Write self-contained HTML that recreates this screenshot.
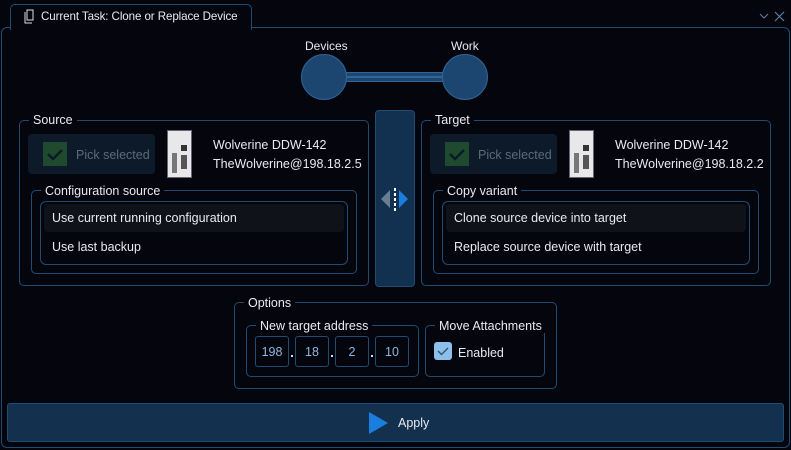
<!DOCTYPE html>
<html><head><meta charset="utf-8"><style>
*{box-sizing:border-box;margin:0;padding:0}
html,body{width:791px;height:450px;overflow:hidden}
body{background:#05060d;font-family:"Liberation Sans",sans-serif;color:#e8eaee;font-size:12px;position:relative}
.a{position:absolute}
.bd{border:1px solid #1f4c74;border-radius:5px}
.lbl{position:absolute;background:#05060d;padding:0 4px;font-size:12.5px;color:#e8eaee;line-height:14px}
.pick{background:#0c1a2a;border-radius:4px}
.chk{position:absolute;width:24px;height:24px;background:#1f4a2e}
.dev{background:#e8e8ea;border:1px solid #667}
.list{border:1px solid #1f4c74;border-radius:6px}
.item{position:absolute;left:3px;right:3px;height:28px;line-height:28px;padding-left:8px;font-size:12.5px;border-radius:4px}
.ip{position:absolute;top:336px;width:34px;height:31px;border:1px solid #1f4c74;border-radius:3px;color:#8fb6e0;text-align:center;line-height:31px;font-size:12.5px}
</style></head><body>
<div class="a" style="left:10px;top:4px;width:242px;height:26px;border:1px solid #1f4c74;border-bottom:none;border-radius:5px 5px 0 0;background:#05060d;z-index:2"></div>
<div class="a" style="left:1px;top:27px;width:789px;height:421px;border:1px solid #1f4c74;border-radius:6px"></div>
<div class="a" style="left:11px;top:26px;width:240px;height:3px;background:#05060d;z-index:2"></div>
<svg class="a" style="left:23px;top:9px;z-index:3" width="14" height="15" viewBox="0 0 14 15"><path d="M4 1h6v10H4z M2 3v11h7" fill="none" stroke="#ddd" stroke-width="1"/></svg>
<div class="a" style="left:41px;top:10px;font-size:11.6px;letter-spacing:-0.1px;z-index:3">Current Task: Clone or Replace Device</div>
<svg class="a" style="left:758px;top:10px" width="30" height="14"><path d="M2 4l4 4 4-4" stroke="#5a7fa6" fill="none"/><path d="M17 2l9 9M26 2l-9 9" stroke="#5a7fa6" stroke-width="1.2"/></svg>
<div class="a" style="left:305px;top:39px;font-size:12px">Devices</div>
<div class="a" style="left:451px;top:39px;font-size:12px">Work</div>
<div class="a" style="left:340px;top:72px;width:110px;height:10px;background:#1c4670;border:1px solid #2f6597"></div>
<div class="a" style="left:345px;top:76px;width:100px;height:2px;background:#2f6597"></div>
<div class="a" style="left:301px;top:54px;width:46px;height:46px;border-radius:50%;background:#1c4670;border:1px solid #2f6597"></div>
<div class="a" style="left:442px;top:54px;width:46px;height:46px;border-radius:50%;background:#1c4670;border:1px solid #2f6597"></div>
<!-- source -->
<div class="a bd" style="left:19px;top:120px;width:350px;height:166px"></div>
<div class="lbl" style="left:29px;top:113px">Source</div>
<div class="a pick" style="left:28px;top:134px;width:127px;height:40px"></div>
<div class="chk" style="left:43px;top:142px"></div>
<svg class="a" style="left:43px;top:142px" width="24" height="24"><path d="M5 12l5 5 9-9" stroke="#0c1a2a" stroke-width="2.5" fill="none"/></svg>
<div class="a" style="left:76px;top:148px;color:#5d6a78;font-size:12.5px">Pick selected</div>
<div class="a dev" style="left:167px;top:130px;width:25px;height:48px"></div>
<div class="a" style="left:181px;top:145px;width:6px;height:6px;background:#333"></div>
<div class="a" style="left:172px;top:153px;width:5px;height:20px;background:#777"></div>
<div class="a" style="left:181px;top:155px;width:6px;height:14px;background:#555"></div>
<div class="a" style="left:213px;top:138px;font-size:12.5px">Wolverine DDW-142</div>
<div class="a" style="left:213px;top:157px;font-size:12.5px">TheWolverine@198.18.2.5</div>
<div class="a bd" style="left:31px;top:190px;width:326px;height:84px"></div>
<div class="lbl" style="left:41px;top:184px">Configuration source</div>
<div class="a list" style="left:40px;top:201px;width:308px;height:64px">
<div class="item" style="top:2px;background:#10121a">Use current running configuration</div>
<div class="item" style="top:31px">Use last backup</div></div>
<!-- middle -->
<div class="a" style="left:375px;top:110px;width:40px;height:177px;background:#12304f;border:1px solid #1f4c74;border-radius:4px"></div>
<svg class="a" style="left:378px;top:186px" width="34" height="28"><path d="M12 4L3 13l9 9z" fill="#6a7d92"/><path d="M21 4l9 9-9 9z" fill="#1a7de0"/><path d="M17 2v24" stroke="#fff" stroke-width="2" stroke-dasharray="3 2"/></svg>
<!-- target -->
<div class="a bd" style="left:421px;top:120px;width:350px;height:166px"></div>
<div class="lbl" style="left:431px;top:113px">Target</div>
<div class="a pick" style="left:430px;top:134px;width:127px;height:40px"></div>
<div class="chk" style="left:445px;top:142px"></div>
<svg class="a" style="left:445px;top:142px" width="24" height="24"><path d="M5 12l5 5 9-9" stroke="#0c1a2a" stroke-width="2.5" fill="none"/></svg>
<div class="a" style="left:478px;top:148px;color:#5d6a78;font-size:12.5px">Pick selected</div>
<div class="a dev" style="left:569px;top:130px;width:25px;height:48px"></div>
<div class="a" style="left:583px;top:145px;width:6px;height:6px;background:#333"></div>
<div class="a" style="left:574px;top:153px;width:5px;height:20px;background:#777"></div>
<div class="a" style="left:583px;top:155px;width:6px;height:14px;background:#555"></div>
<div class="a" style="left:615px;top:138px;font-size:12.5px">Wolverine DDW-142</div>
<div class="a" style="left:615px;top:157px;font-size:12.5px">TheWolverine@198.18.2.2</div>
<div class="a bd" style="left:433px;top:190px;width:326px;height:84px"></div>
<div class="lbl" style="left:443px;top:184px">Copy variant</div>
<div class="a list" style="left:442px;top:201px;width:308px;height:64px">
<div class="item" style="top:2px;background:#10121a">Clone source device into target</div>
<div class="item" style="top:31px">Replace source device with target</div></div>
<!-- options -->
<div class="a bd" style="left:234px;top:302px;width:323px;height:87px"></div>
<div class="lbl" style="left:244px;top:296px">Options</div>
<div class="a bd" style="left:246px;top:325px;width:173px;height:52px"></div>
<div class="lbl" style="left:256px;top:319px">New target address</div>
<div class="ip" style="left:255px">198</div><div class="ip" style="left:295px">18</div><div class="ip" style="left:335px">2</div><div class="ip" style="left:375px">10</div>
<div class="a" style="left:291px;top:355px;width:2px;height:2px;background:#ddd"></div>
<div class="a" style="left:331px;top:355px;width:2px;height:2px;background:#ddd"></div>
<div class="a" style="left:371px;top:355px;width:2px;height:2px;background:#ddd"></div>
<div class="a bd" style="left:425px;top:325px;width:120px;height:52px"></div>
<div class="lbl" style="left:435px;top:319px">Move Attachments</div>
<div class="a" style="left:434px;top:342px;width:18px;height:18px;background:#8cc0ea;border-radius:3px"></div>
<svg class="a" style="left:434px;top:342px" width="18" height="18"><path d="M4 9l3.5 3.5L14 6" stroke="#2a4e70" stroke-width="1.3" fill="none"/></svg>
<div class="a" style="left:458px;top:346px;font-size:12.5px">Enabled</div>
<!-- apply -->
<div class="a" style="left:7px;top:403px;width:777px;height:39px;background:#13304f;border:1px solid #1f4c74;border-radius:3px"></div>
<svg class="a" style="left:368px;top:411px" width="22" height="24"><path d="M1 1l19 11L1 23z" fill="#1a7de0"/></svg>
<div class="a" style="left:398px;top:416px;font-size:12.5px">Apply</div>
</body></html>
